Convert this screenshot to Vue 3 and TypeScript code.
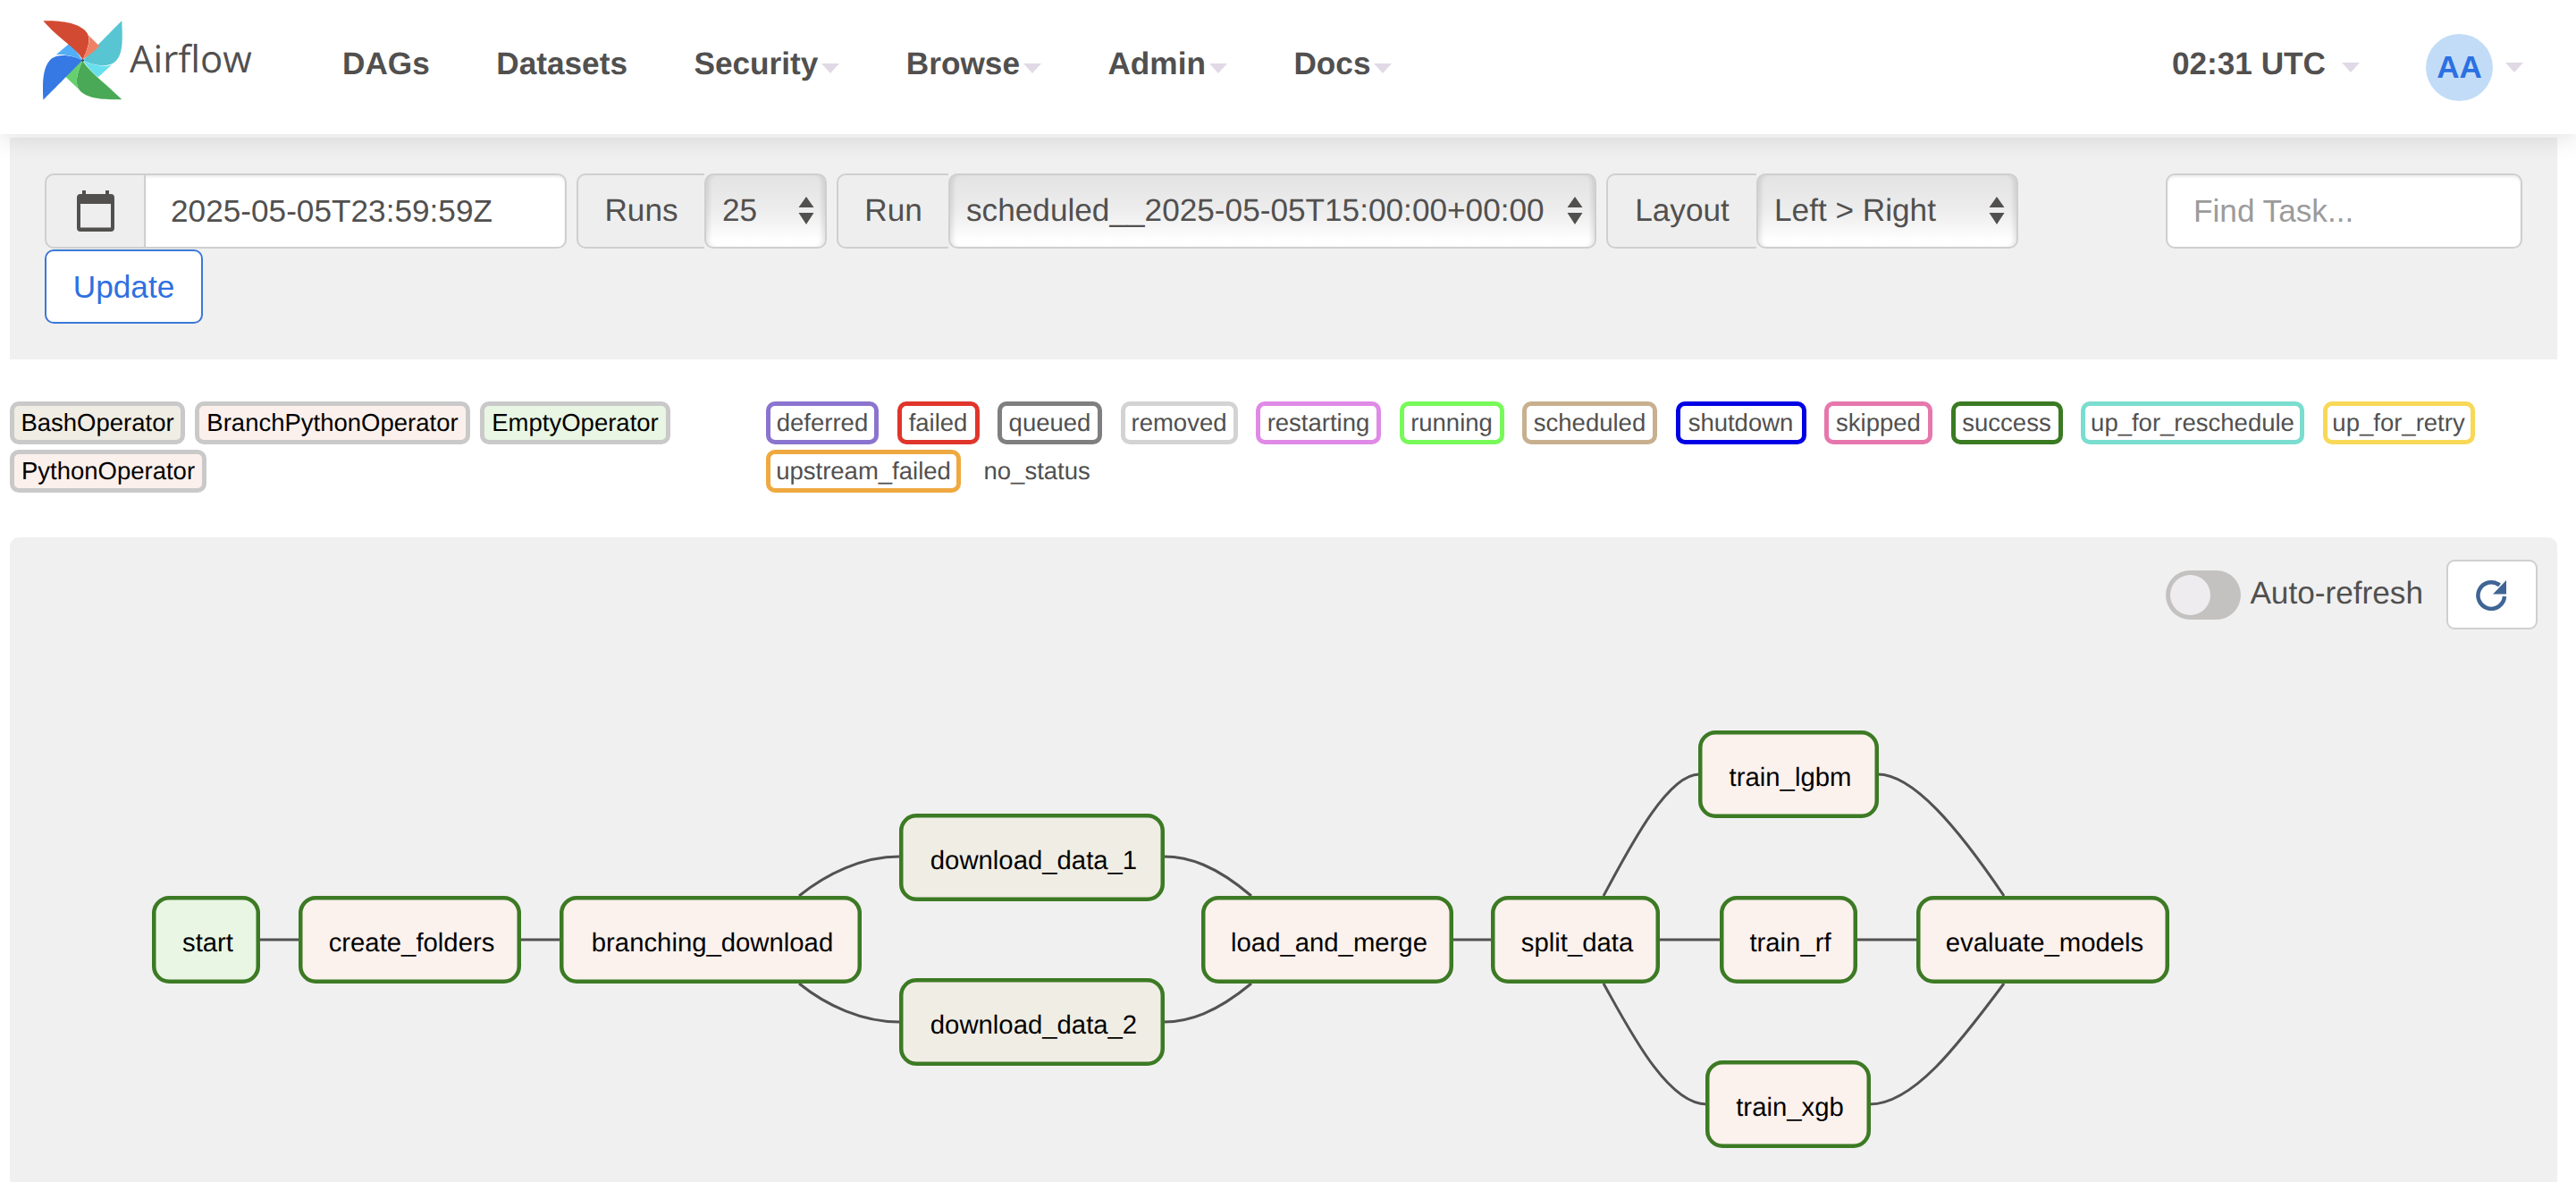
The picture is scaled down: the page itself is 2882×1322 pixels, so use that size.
<script setup lang="ts">
interface Chip { label: string; color: string; width: number }
interface Node { label: string; x: number; y: number; w: number; h: number; fill: string }

const navLinks: { label: string; caret: boolean }[] = [
  { label: 'DAGs', caret: false },
  { label: 'Datasets', caret: false },
  { label: 'Security', caret: true },
  { label: 'Browse', caret: true },
  { label: 'Admin', caret: true },
  { label: 'Docs', caret: true },
]

const operators: Chip[] = [
  { label: 'BashOperator', color: '#f0ede4', width: 196 },
  { label: 'BranchPythonOperator', color: '#fbf0ec', width: 308 },
  { label: 'EmptyOperator', color: '#e8f6e3', width: 213 },
  { label: 'PythonOperator', color: '#fbf0ec', width: 220 },
]

const states: Chip[] = [
  { label: 'deferred', color: '#8b74cf', width: 126 },
  { label: 'failed', color: '#e0352b', width: 92 },
  { label: 'queued', color: '#7f7f7f', width: 117 },
  { label: 'removed', color: '#d3d3d3', width: 131 },
  { label: 'restarting', color: '#df8ae6', width: 140 },
  { label: 'running', color: '#78f95a', width: 117 },
  { label: 'scheduled', color: '#c8b08f', width: 151 },
  { label: 'shutdown', color: '#0000e4', width: 146 },
  { label: 'skipped', color: '#e677ad', width: 121 },
  { label: 'success', color: '#3a7a22', width: 125 },
  { label: 'up_for_reschedule', color: '#7addcf', width: 250 },
  { label: 'up_for_retry', color: '#f7d857', width: 170 },
  { label: 'upstream_failed', color: '#efa940', width: 218 },
]

const BASH = '#f0ede4'
const PY = '#fbf1ed'
const EMPTY = '#e9f6e4'

const nodes: Node[] = [
  { label: 'start', x: 170, y: 1002, w: 121, h: 98, fill: EMPTY },
  { label: 'create_folders', x: 334, y: 1002, w: 249, h: 98, fill: PY },
  { label: 'branching_download', x: 626, y: 1002, w: 338, h: 98, fill: PY },
  { label: 'download_data_1', x: 1006, y: 910, w: 297, h: 98, fill: BASH },
  { label: 'download_data_2', x: 1006, y: 1094, w: 297, h: 98, fill: BASH },
  { label: 'load_and_merge', x: 1344, y: 1002, w: 282, h: 98, fill: PY },
  { label: 'split_data', x: 1668, y: 1002, w: 189, h: 98, fill: PY },
  { label: 'train_lgbm', x: 1900, y: 817, w: 202, h: 98, fill: PY },
  { label: 'train_rf', x: 1924, y: 1002, w: 154, h: 98, fill: PY },
  { label: 'train_xgb', x: 1908, y: 1186, w: 185, h: 98, fill: PY },
  { label: 'evaluate_models', x: 2144, y: 1002, w: 283, h: 98, fill: PY },
]

const edges: string[] = [
  'M291 1051H335',
  'M582 1051H626',
  'M894 1002C925 977 965 958 1006 958',
  'M894 1100C925 1125 965 1143 1006 1143',
  'M1302 958C1330 958 1360 968 1400 1002',
  'M1302 1143C1330 1143 1360 1133 1400 1100',
  'M1625 1051H1669',
  'M1856 1051H1925',
  'M2077 1051H2145',
  'M1794 1002C1822 950 1865 866 1901 866',
  'M1794 1100C1822 1150 1865 1235 1909 1235',
  'M2101 866C2140 866 2190 925 2242 1002',
  'M2092 1235C2140 1235 2190 1170 2242 1100',
]
</script>

<template>
  <div class="page">
    <header class="nav">
      <div class="brand">
        <svg class="logo" viewBox="57 37 264 266" width="89" height="89">
          <path d="M320 38C322 100 326 150 296 176C270 196 222 186 190 170C212 148 262 95 320 38Z" fill="#58c5d2" />
          <path d="M190 171C222 186 262 194 287 184L241 226C222 214 204 190 190 171Z" fill="#68dfec" />
          <path d="M320 301C268 301 204 302 177 268C160 244 174 204 189 171C208 206 262 244 320 301Z" fill="#4aa956" />
          <path d="M189 171C157 184 141 204 133 226L177 268C160 244 174 204 189 171Z" fill="#66d06f" />
          <path d="M57 302C54 250 54 190 85 164C110 146 160 154 188 170C166 192 114 246 57 302Z" fill="#3679e4" />
          <path d="M188 170C160 154 122 148 100 151L145 113C162 128 176 150 188 170Z" fill="#52aef6" />
          <path d="M57 38C110 37 180 42 205 80C218 104 202 138 189 168C170 130 110 100 57 38Z" fill="#d34a32" />
          <path d="M189 168C202 138 218 104 207 85L245 122C230 140 205 155 189 168Z" fill="#ef8265" />
          <circle cx="189" cy="170" r="4" fill="#33383b" />
        </svg>
        <span class="wordmark">Airflow</span>
      </div>
      <nav class="links">
        <a v-for="link in navLinks" :key="link.label" class="link">
          {{ link.label }}<i v-if="link.caret" class="caret" />
        </a>
      </nav>
      <div class="nav-right">
        <span class="clock">02:31 UTC</span><i class="caret clock-caret" />
        <span class="avatar">AA</span><i class="caret avatar-caret" />
      </div>
    </header>

    <section class="filter-panel">
      <div class="filter-row">
        <div class="group">
          <span class="addon cal-addon">
            <svg width="42" height="46" viewBox="0 0 42 46">
              <path d="M6 0h4v4h22V0h4v4h2a4 4 0 0 1 4 4v34a4 4 0 0 1-4 4H4a4 4 0 0 1-4-4V8a4 4 0 0 1 4-4h2z" fill="#51504f" />
              <rect x="4" y="15" width="34" height="26.5" fill="#eeeeee" />
            </svg>
          </span>
          <input class="text-input date-input" readonly value="2025-05-05T23:59:59Z" />
        </div>
        <div class="group">
          <span class="addon runs-addon">Runs</span>
          <div class="select runs-select">
            <span>25</span>
            <svg class="updown" width="18" height="31" viewBox="0 0 18 31"><path d="M9 0l8.500 12H.5zM9 31L.5 18h17z" fill="#51504f" /></svg>
          </div>
        </div>
        <div class="group">
          <span class="addon run-addon">Run</span>
          <div class="select run-select">
            <span>scheduled__2025-05-05T15:00:00+00:00</span>
            <svg class="updown" width="18" height="31" viewBox="0 0 18 31"><path d="M9 0l8.500 12H.5zM9 31L.5 18h17z" fill="#51504f" /></svg>
          </div>
        </div>
        <div class="group">
          <span class="addon layout-addon">Layout</span>
          <div class="select layout-select">
            <span>Left &gt; Right</span>
            <svg class="updown" width="18" height="31" viewBox="0 0 18 31"><path d="M9 0l8.500 12H.5zM9 31L.5 18h17z" fill="#51504f" /></svg>
          </div>
        </div>
        <input class="text-input find-input" readonly placeholder="Find Task..." />
      </div>
      <button class="update-btn" type="button">Update</button>
    </section>

    <section class="legend">
      <div class="legend-col ops">
        <span
          v-for="op in operators"
          :key="op.label"
          class="chip op-chip"
          :style="{ backgroundColor: op.color, width: op.width + 'px' }"
        >{{ op.label }}</span>
      </div>
      <div class="legend-col sts">
        <span
          v-for="st in states"
          :key="st.label"
          class="chip state-chip"
          :style="{ borderColor: st.color, width: st.width + 'px' }"
        >{{ st.label }}</span>
        <span class="no-status">no_status</span>
      </div>
    </section>

    <section class="graph-panel">
      <div class="graph-tools">
        <span class="toggle"><i class="knob" /></span>
        <span class="auto-label">Auto-refresh</span>
        <button class="refresh-btn" type="button">
          <svg width="36" height="36" viewBox="0 0 36 36">
            <path d="M26.500 7.500A14.800 14.800 0 1 0 32 20" fill="none" stroke="#3f6595" stroke-width="4.500" />
            <path d="M34 2v15.500H19z" fill="#3f6595" />
          </svg>
        </button>
      </div>
      <svg class="dag" viewBox="11 704 2850 618" width="2850" height="618">
        <path v-for="(d, i) in edges" :key="i" :d="d" fill="none" stroke="#525252" stroke-width="3" />
        <g v-for="n in nodes" :key="n.label">
          <rect
            :x="n.x + 2.250"
            :y="n.y + 2.250"
            :width="n.w - 4.500"
            :height="n.h - 4.500"
            rx="17"
            :fill="n.fill"
            stroke="#3c7a24"
            stroke-width="4.500"
          />
          <text class="node-text" :x="n.x + n.w / 2 + 2" :y="n.y + n.h / 2 + 13" text-anchor="middle">{{ n.label }}</text>
        </g>
      </svg>
    </section>
  </div>
</template>

<style scoped>
.page {
  width: 2882px;
  height: 1322px;
  overflow: hidden;
  background: #fff;
  color: #51504f;
  font-family: "Liberation Sans", Arial, sans-serif;
  font-size: 35.2px;
  text-rendering: geometricPrecision;
}

/* top bar */
.nav {
  position: relative;
  z-index: 2;
  display: flex;
  align-items: center;
  height: 150px;
  padding: 0 59px 0 48px;
  box-sizing: border-box;
  background: #fff;
  box-shadow: 0 3px 28px rgba(0, 0, 0, 0.13);
}
.brand {
  display: flex;
  align-items: center;
  gap: 8px;
  width: 335px;
  margin-top: -16px;
}
.logo { display: block; flex: none; }
.wordmark {
  font-family: "Open Sans", sans-serif;
  font-size: 42px;
  line-height: 1;
  color: #51504f;
  margin-top: -2px;
}
.links {
  display: flex;
  align-items: center;
  gap: 74.500px;
  font-weight: 700;
  margin-top: -6px;
}
.link { display: flex; align-items: center; }
.caret {
  display: block;
  width: 0;
  height: 0;
  margin-left: 4px;
  margin-top: 8px;
  border-left: 10px solid transparent;
  border-right: 10px solid transparent;
  border-top: 11px solid #e1d9e5;
}
.nav-right {
  display: flex;
  align-items: center;
  margin-left: auto;
  font-weight: 700;
}
.clock { margin-top: -6px; }
.clock-caret { margin-left: 18px; margin-top: 0; }
.avatar {
  width: 75px;
  height: 75px;
  margin-left: 74px;
  border-radius: 50%;
  background: #c2dcf7;
  color: #2b70e2;
  font-size: 35px;
  line-height: 75px;
  text-align: center;
}
.avatar-caret { margin-left: 14px; margin-top: 0; }

/* filter panel */
.filter-panel {
  height: 248px;
  margin: 4px 21px 0 11px;
  padding: 40px 39px 0;
  box-sizing: border-box;
  background: #f0f0f0;
}
.filter-row {
  display: flex;
  align-items: flex-start;
  gap: 11px;
}
.group { display: flex; height: 84px; }
.addon {
  display: flex;
  align-items: center;
  justify-content: center;
  box-sizing: border-box;
  background: #eee;
  border: 2.500px solid #cfcfcf;
  border-right: 0;
  border-radius: 10px 0 0 10px;
  color: #51504f;
}
.cal-addon {
  width: 113px;
  border-right: 2.500px solid #cfcfcf;
}
.runs-addon { width: 143px; }
.run-addon { width: 125px; }
.layout-addon { width: 168px; }
.text-input {
  height: 84px;
  box-sizing: border-box;
  background: #fff;
  border: 2.500px solid #cfcfcf;
  color: #51504f;
  font: inherit;
  outline: none;
  box-shadow: inset 0 2px 3px rgba(0, 0, 0, 0.08);
}
.text-input::placeholder { color: #9b9b9b; opacity: 1; }
.date-input {
  width: 471px;
  padding: 0 28px;
  border-left: 0;
  border-radius: 0 10px 10px 0;
}
.find-input {
  width: 399px;
  margin-left: auto;
  margin-right: 0;
  padding: 0 29px;
  border-radius: 10px;
}
.select {
  display: flex;
  align-items: center;
  justify-content: space-between;
  box-sizing: border-box;
  padding-left: 18px;
  background: linear-gradient(180deg, #e3e3e3 0%, #ececec 45%, #f2f2f2 62%, #fff 92%);
  border: 2.500px solid #cfcfcf;
  border-radius: 10px;
  box-shadow: inset 6px 0 5px -3px rgba(0, 0, 0, 0.1), inset -6px 0 5px -3px rgba(0, 0, 0, 0.1);
  color: #51504f;
  white-space: nowrap;
}
.updown { flex: none; margin-top: -1px; }
.runs-select { width: 137px; padding-right: 12px; }
.run-select { width: 725px; padding-right: 13px; }
.layout-select { width: 293px; padding-right: 13px; }
.update-btn {
  display: block;
  width: 177px;
  height: 83px;
  margin-top: 1px;
  padding: 0;
  background: #fff;
  border: 2.500px solid #3b78d8;
  border-radius: 10px;
  color: #2f70e0;
  font: inherit;
}

/* legend */
.legend {
  display: flex;
  margin: 47px 21px 0 11px;
  font-size: 27.500px;
  line-height: 1;
}
.legend-col {
  display: flex;
  flex-wrap: wrap;
  align-content: flex-start;
  row-gap: 6px;
}
.ops { width: 846px; column-gap: 11px; }
.sts { flex: 1; column-gap: 20.500px; }
.chip {
  display: flex;
  align-items: center;
  justify-content: center;
  height: 48px;
  box-sizing: border-box;
  border: 5px solid;
  border-radius: 10px;
  white-space: nowrap;
}
.op-chip { border-color: #cac9c9; color: #000; }
.state-chip { background: #fff; color: #51504f; }
.no-status {
  display: flex;
  align-items: center;
  height: 48px;
  margin-left: 5px;
}

/* graph */
.graph-panel {
  height: 721px;
  margin: 50px 21px 0 11px;
  background: #f0f0f0;
  border-radius: 10px 10px 0 0;
}
.graph-tools {
  display: flex;
  align-items: center;
  justify-content: flex-end;
  height: 103px;
  padding: 25px 22px 0 0;
  box-sizing: border-box;
}
.toggle {
  display: block;
  width: 84px;
  height: 55px;
  padding: 5px;
  box-sizing: border-box;
  background: #c3c2c1;
  border-radius: 28px;
}
.knob {
  display: block;
  width: 45px;
  height: 45px;
  border-radius: 50%;
  background: #eeecee;
}
.auto-label { margin: -3px 26px 0 10px; }
.refresh-btn {
  display: flex;
  align-items: center;
  justify-content: center;
  width: 102px;
  height: 78px;
  padding: 0;
  background: #fff;
  border: 2.500px solid #cfcfcf;
  border-radius: 9px;
}
.dag { display: block; }
.node-text {
  font-family: "Liberation Sans", Arial, sans-serif;
  font-size: 29.300px;
  fill: #000;
  text-rendering: geometricPrecision;
}
</style>

<style>
html, body { margin: 0; background: #fff; overflow: hidden; }
</style>
